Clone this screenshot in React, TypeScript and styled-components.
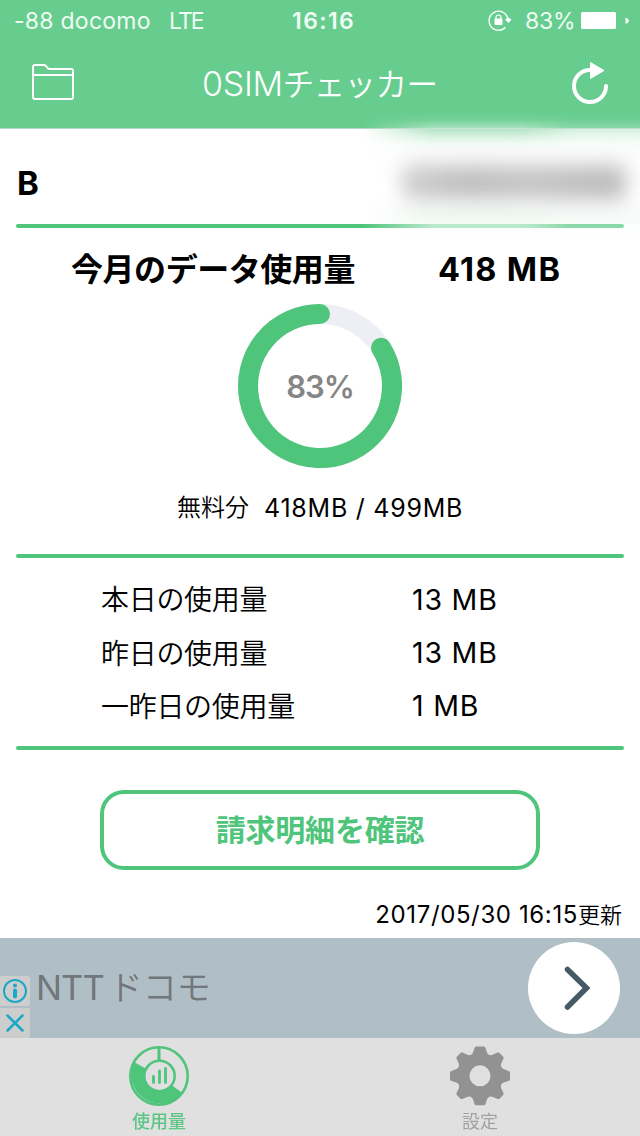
import React from "react";
import styled, { createGlobalStyle } from "styled-components";

const green = "#4fc47b";
const headerGreen = "#67cd8f";

const GlobalStyle = createGlobalStyle`
  * { box-sizing: border-box; }
  body {
    margin: 0;
    background: #fff;
    color: #000;
    font-family: Inter, "Noto Sans CJK JP", sans-serif;
  }
`;

const Screen = styled.div`
  position: relative;
  width: 640px;
  height: 1136px;
  display: flex;
  flex-direction: column;
  overflow: hidden;
  background: #fff;
`;

const Text = styled.span<{ $size: number; $weight?: number; $track?: number }>`
  font-size: ${(p) => p.$size}px;
  font-weight: ${(p) => p.$weight ?? 400};
  letter-spacing: ${(p) => p.$track ?? 0}px;
  line-height: 1;
  white-space: pre;
`;

const Header = styled.header`
  height: 129px;
  flex: none;
  background: ${headerGreen};
  color: #fff;
  border-bottom: 1px solid #b5d6c2;
`;

const StatusBar = styled.div`
  height: 40px;
  display: grid;
  grid-template-columns: 155px 123px 196px 37px 56px 1fr;
  align-items: center;
  padding: 2px 0 0 14px;
  color: #effcf3;
`;

const NavBar = styled.div`
  height: 88px;
  display: grid;
  grid-template-columns: 170px 1fr 68px;
  align-items: center;
  padding-left: 32px;
  > svg:first-child { margin-bottom: 4px; }
`;

const Content = styled.main`
  height: 809px;
  flex: none;
  display: flex;
  flex-direction: column;
`;

const Rule = styled.hr`
  width: 608px;
  height: 4px;
  flex: none;
  margin: 0 16px;
  border: 0;
  border-radius: 2px;
  background: ${green};
`;

const AccountRow = styled.div`
  height: 95px;
  display: flex;
  align-items: center;
  padding: 14px 0 0 17px;
`;

const TotalRow = styled.div`
  height: 76px;
  display: grid;
  grid-template-columns: 367px 1fr;
  align-items: center;
  padding: 8px 0 0 71px;
`;

const RingBox = styled.div`
  height: 164px;
  display: grid;
  place-items: center;
  color: #858585;
  > * { grid-area: 1 / 1; }
`;

const FreeRow = styled.div`
  height: 86px;
  display: flex;
  align-items: center;
  gap: 15px;
  padding: 0 0 6px 177px;
`;

const DailyList = styled.div`
  height: 188px;
  display: grid;
  grid-template-rows: 54px 53px 53px;
  padding: 15px 0 0 101px;
`;

const DailyRow = styled.div`
  display: grid;
  grid-template-columns: 311px 1fr;
  align-items: center;
`;

const DetailButton = styled.button`
  width: 440px;
  height: 80px;
  margin: 40px auto 0;
  display: flex;
  align-items: center;
  justify-content: center;
  border: 4px solid ${green};
  border-radius: 24px;
  background: #fff;
  color: ${green};
  font-family: inherit;
  padding: 0;
`;

const Updated = styled.div`
  height: 68px;
  display: flex;
  align-items: center;
  justify-content: flex-end;
  padding: 22px 18px 0 0;
`;

const AdBanner = styled.div`
  height: 100px;
  flex: none;
  display: flex;
  align-items: center;
  background: #b0bec5;
  color: #71777a;
`;

const AdTitle = styled.div`
  display: flex;
  align-items: center;
  gap: 5px;
`;

const AdBadges = styled.div`
  width: 30px;
  align-self: flex-end;
  display: flex;
  flex-direction: column;
  gap: 2px;
  margin-right: 6px;
`;

const AdBadge = styled.div`
  height: 30px;
  display: grid;
  place-items: center;
  background: #cdcdcd;
  border-radius: 0 2px 2px 0;
`;

const AdArrow = styled.div`
  width: 92px;
  height: 92px;
  margin: 0 20px 0 auto;
  padding-left: 6px;
  border-radius: 50%;
  background: #fff;
  display: grid;
  place-items: center;
`;

const TabBar = styled.nav`
  height: 98px;
  flex: none;
  display: grid;
  grid-template-columns: 318px 324px;
  background: #e0e0e0;
`;

const Tab = styled.div<{ $active?: boolean }>`
  display: flex;
  flex-direction: column;
  align-items: center;
  gap: 7px;
  padding-top: 8px;
  color: ${(p) => (p.$active ? green : "#929292")};
  > span { opacity: ${(p) => (p.$active ? 0.9 : 0.8)}; }
`;

const Redaction = styled.div`
  position: absolute;
  left: 362px;
  top: 112px;
  width: 278px;
  height: 126px;
  overflow: hidden;
`;

const Haze = styled.div`
  position: absolute;
  inset: 0;
  background: linear-gradient(
    to bottom,
    rgba(255, 255, 255, 0) 0,
    rgba(255, 255, 255, 0.1) 8px,
    rgba(255, 255, 255, 0.42) 16px,
    #b3e4c6 17px,
    #d4f0de 24px,
    #f2fbf5 32px,
    #fcfcfc 40px,
    #fff 84px,
    #f3faf5 100px,
    #f1faf4 111px,
    rgba(244, 252, 247, 0.65) 112px,
    rgba(244, 252, 247, 0.65) 116px,
    #fbfefc 117px,
    #fff 126px
  );
  mask-image: linear-gradient(to right, transparent, #000 70px, #000 160px, rgba(0, 0, 0, 0.55) 210px, rgba(0, 0, 0, 0.55));
`;

const Smudge = styled.div`
  position: absolute;
  left: 40px;
  top: 53px;
  width: 224px;
  height: 35px;
  border-radius: 8px;
  background: linear-gradient(to right, #cfcfcf, #bfbfbf 30%, #c6c6c6 55%, #bdbdbd 90%);
  filter: blur(10px);
`;

const FolderIcon = () => (
  <svg width="42" height="36" viewBox="0 0 42 36" fill="none" stroke="#fff" strokeWidth="2">
    <path d="M1 11V3Q1 1 3 1H12Q13.500 1 14.500 2.500L16 4.500Q16.500 5 18 5H39Q41 5 41 7V33Q41 35 39 35H3Q1 35 1 33V11H41" />
  </svg>
);

const RefreshIcon = () => (
  <svg width="38" height="44" viewBox="0 0 38 44">
    <path d="M18 8A16 16 0 1 0 34 24" fill="none" stroke="#fff" strokeWidth="4" strokeLinecap="round" />
    <path d="M18.500 .500V16.500L32 8.500Z" fill="#fff" stroke="#fff" strokeWidth="1" strokeLinejoin="round" />
  </svg>
);

const LockIcon = () => (
  <svg width="24" height="22" viewBox="0 0 24 22" fill="none">
    <path d="M19.800 8.500A9.500 9.500 0 1 0 17.500 17.200" stroke="#fff" strokeWidth="1.300" />
    <path d="M17 9.500L20.200 7.500L23.500 9.500L20.500 13Z" fill="#fff" />
    <rect x="6.500" y="8.500" width="8" height="6.500" rx="1" fill="#fff" />
    <path d="M8 9V7.500Q8 5 10.500 5T13 7.500V9" stroke="#fff" strokeWidth="1.200" />
  </svg>
);

const BatteryIcon = () => (
  <svg width="50" height="20" viewBox="0 0 50 20" fill="#fff">
    <rect x="0" y="1" width="35" height="17" rx="1.500" />
    <path d="M44.500 6.500Q51.500 9.500 44.500 13Z" />
  </svg>
);

const Ring = () => (
  <svg width="164" height="164" viewBox="0 0 164 164" fill="none" strokeWidth="20">
    <circle cx="82" cy="82" r="72" stroke="#eeeff4" />
    <path d="M143.100 43.850A72 72 0 1 1 82 10" stroke={green} strokeLinecap="round" />
  </svg>
);

const InfoIcon = () => (
  <svg width="26" height="26" viewBox="0 0 26 26" fill="none" stroke="#1aa8c8">
    <circle cx="13" cy="13" r="11" strokeWidth="2" />
    <path d="M13 12.500V18.500" strokeWidth="4" strokeLinecap="round" />
    <circle cx="13" cy="7.500" r="2" fill="#1aa8c8" stroke="none" />
  </svg>
);

const CloseIcon = () => (
  <svg width="18" height="18" viewBox="0 0 18 18" stroke="#1aa8c8" strokeWidth="2.500" strokeLinecap="round">
    <path d="M1.500 1.500L16.500 16.500M16.500 1.500L1.500 16.500" />
  </svg>
);

const ArrowIcon = () => (
  <svg width="28" height="46" viewBox="0 0 28 46" fill="none" stroke="#455a64" strokeWidth="5.500" strokeLinecap="round">
    <path d="M4.500 4.500L23.500 23L4.500 42" />
  </svg>
);

const UsageIcon = () => (
  <svg width="60" height="60" viewBox="0 0 60 60" fill="none">
    <circle cx="30" cy="30" r="28.700" stroke={green} strokeWidth="2.600" />
    <path d="M5 16A29 29 0 0 0 53.500 47L30 30Z" fill={green} />
    <path d="M30 2V16" stroke={green} strokeWidth="3" />
    <circle cx="30.500" cy="30" r="15.200" fill="#e0e0e0" stroke={green} strokeWidth="2.500" />
    <path d="M24.500 30.500V36.500M30.500 25V36.500M36.500 22.500V36.500" stroke={green} strokeWidth="2.800" strokeLinecap="round" />
  </svg>
);

const GearIcon = () => (
  <svg width="60" height="60" viewBox="0 0 60 60" fill="#929292">
    <path
      fillRule="evenodd"
      d="M26 .500H34Q35 .500 35.500 2L37 6.500Q37.700 8.500 39.500 9Q41 9.500 43 8.500L47.500 6.500Q48.500 6 49.500 7L53 10.500Q54 11.500 53.500 12.500L51.500 17Q50.500 19 51.200 20.500Q51.700 22.300 53.500 23L58.500 25Q60 25.500 60 27V33Q60 34.500 58.500 35L53.500 36.500Q51.700 37.300 51 39Q50.500 41 51.500 43L53.500 47Q54 48.200 53 49.200L49.500 52.700Q48.500 53.500 47.500 53L43 51Q41 50 39.500 50.700Q37.700 51.300 37 53.300L35.500 58Q35 59.300 34 59.300H26Q25 59.300 24.500 58L23 53.300Q22.300 51.300 20.500 50.700Q19 50 17 51L12.500 53Q11.500 53.500 10.500 52.700L7 49.200Q6 48.200 6.500 47L8.500 43Q9.500 41 9 39Q8.300 37.300 6.500 36.500L1.500 35Q0 34.500 0 33V27Q0 25.500 1.500 25L6.500 23Q8.300 22.300 8.800 20.500Q9.500 19 8.500 17L6.500 12.500Q6 11.500 7 10.500L10.500 7Q11.500 6 12.500 6.500L17 8.500Q19 9.500 20.500 9Q22.300 8.500 23 6.500L24.500 2Q25 .500 26 .500ZM30 19.300A10.500 10.500 0 1 0 30 40.300A10.500 10.500 0 1 0 30 19.300Z"
    />
  </svg>
);

const daily = [
  { label: "本日の使用量", value: "13 MB" },
  { label: "昨日の使用量", value: "13 MB" },
  { label: "一昨日の使用量", value: "1 MB" },
];

export default function App() {
  return (
    <Screen>
      <GlobalStyle />
      <Header>
        <StatusBar>
          <Text $size={23} $track={0.25}>-88 docomo</Text>
          <Text $size={23} $track={-1.9}>LTE</Text>
          <Text $size={23} $weight={600} $track={1.4}>16:16</Text>
          <LockIcon />
          <Text $size={23} $track={-0.2}>83%</Text>
          <BatteryIcon />
        </StatusBar>
        <NavBar>
          <FolderIcon />
          <Text $size={34} $weight={350} $track={-0.3}>
            0SIM<Text $size={31.500} $weight={350} $track={-0.6}>チェッカー</Text>
          </Text>
          <RefreshIcon />
        </NavBar>
      </Header>
      <Content>
        <AccountRow>
          <Text $size={33} $weight={700}>B</Text>
        </AccountRow>
        <Rule />
        <TotalRow>
          <Text $size={32} $weight={700} $track={-0.45}>今月のデータ使用量</Text>
          <Text $size={32.500} $weight={700} $track={1.3}>418 MB</Text>
        </TotalRow>
        <RingBox>
          <Ring />
          <Text $size={31} $weight={600} $track={-1}>83%</Text>
        </RingBox>
        <FreeRow>
          <Text $size={24} $weight={350}>無料分</Text>
          <Text $size={25} $track={0.75}>418MB / 499MB</Text>
        </FreeRow>
        <Rule />
        <DailyList>
          {daily.map((d) => (
            <DailyRow key={d.label}>
              <Text $size={28} $weight={350} $track={-0.3}>{d.label}</Text>
              <Text $size={28.500} $track={0.8}>{d.value}</Text>
            </DailyRow>
          ))}
        </DailyList>
        <Rule />
        <DetailButton>
          <Text $size={30} $weight={700} $track={-0.2}>請求明細を確認</Text>
        </DetailButton>
        <Updated>
          <Text $size={24} $track={0.62}>2017/05/30 16:15</Text>
          <Text $size={22} $weight={350}>更新</Text>
        </Updated>
      </Content>
      <AdBanner>
        <AdBadges>
          <AdBadge><InfoIcon /></AdBadge>
          <AdBadge><CloseIcon /></AdBadge>
        </AdBadges>
        <AdTitle>
          <Text $size={34.500} $track={-0.9}>NTT</Text>
          <Text $size={34} $weight={350}>ドコモ</Text>
        </AdTitle>
        <AdArrow><ArrowIcon /></AdArrow>
      </AdBanner>
      <TabBar>
        <Tab $active>
          <UsageIcon />
          <Text $size={18} $weight={500}>使用量</Text>
        </Tab>
        <Tab>
          <GearIcon />
          <Text $size={18}>設定</Text>
        </Tab>
      </TabBar>
      <Redaction>
        <Haze />
        <Smudge />
      </Redaction>
    </Screen>
  );
}
